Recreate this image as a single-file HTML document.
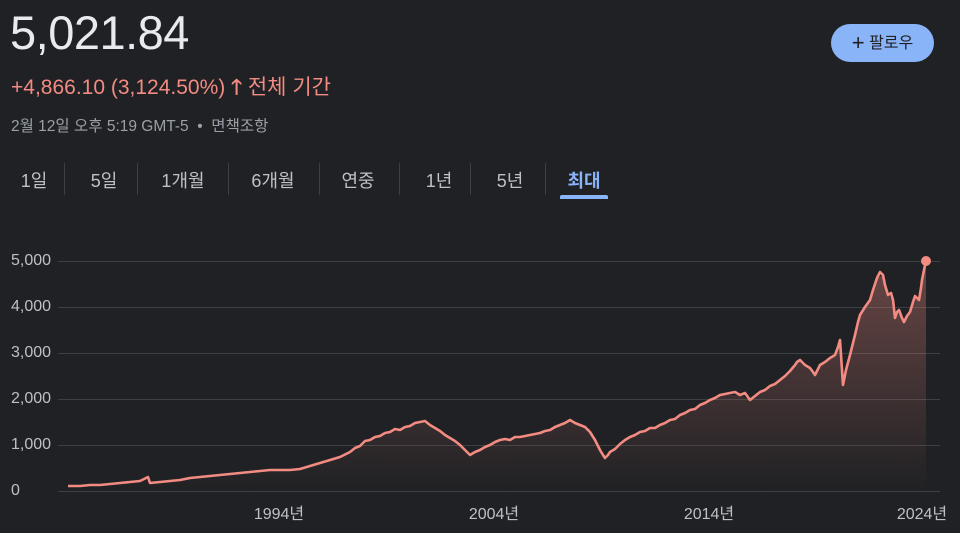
<!DOCTYPE html>
<html><head><meta charset="utf-8"><style>
body{margin:0;width:960px;height:533px;background:#202124;overflow:hidden;font-family:"Liberation Sans","Noto Sans CJK KR",sans-serif;position:relative}
.a{position:absolute;white-space:nowrap}
.tab{position:absolute;top:167px;font-size:18px;color:#bdc1c6;transform:translateX(-50%);white-space:nowrap}
.sep{position:absolute;top:163px;width:1px;height:32px;background:#3c4043}
.yl{position:absolute;left:11px;font-size:16px;color:#bdc1c6}
.xl{position:absolute;top:500px;font-size:16px;color:#bdc1c6;transform:translateX(-50%);white-space:nowrap}
</style></head><body>
<div class="a" style="left:10px;top:5px;font-size:47px;color:#e8eaed;letter-spacing:-0.5px">5,021.84</div>
<div class="a" style="left:11px;top:71px;font-size:21px;color:#f28b82">+4,866.10 (3,124.50%) <b style="font-weight:bold">🡑</b> 전체 기간</div>
<div class="a" style="left:11px;top:114px;font-size:15.5px;color:#9aa0a6">2월 12일 오후 5:19 GMT-5 &nbsp;•&nbsp; 면책조항</div>
<div class="a" style="left:831px;top:24px;width:103px;height:38px;border-radius:19px;background:#8ab4f8;color:#202124;font-size:16px;line-height:38px;text-align:center"><span style="font-size:22px;vertical-align:-2px">+</span> 팔로우</div>
<div class="tab" style="left:34px">1일</div>
<div class="tab" style="left:104px">5일</div>
<div class="tab" style="left:183px">1개월</div>
<div class="tab" style="left:273px">6개월</div>
<div class="tab" style="left:358px">연중</div>
<div class="tab" style="left:439px">1년</div>
<div class="tab" style="left:510px">5년</div>
<div class="tab" style="left:584px;color:#8ab4f8;font-weight:bold">최대</div>
<div class="sep" style="left:64px"></div><div class="sep" style="left:137px"></div><div class="sep" style="left:228px"></div><div class="sep" style="left:319px"></div><div class="sep" style="left:399px"></div><div class="sep" style="left:470px"></div><div class="sep" style="left:545px"></div>
<div class="a" style="left:560px;top:195px;width:48px;height:4px;border-radius:2px 2px 0 0;background:#8ab4f8"></div>
<div class="yl" style="top:252px">5,000</div>
<div class="yl" style="top:298px">4,000</div>
<div class="yl" style="top:344px">3,000</div>
<div class="yl" style="top:390px">2,000</div>
<div class="yl" style="top:436px">1,000</div>
<div class="yl" style="top:482px">0</div>
<div class="xl" style="left:279px">1994년</div>
<div class="xl" style="left:494px">2004년</div>
<div class="xl" style="left:709px">2014년</div>
<div class="xl" style="left:922px">2024년</div>
<svg class="a" style="left:0;top:0" width="960" height="533">
<defs><linearGradient id="g" x1="0" y1="0" x2="0" y2="1"><stop offset="0" stop-color="#f28b82" stop-opacity="0.35"/><stop offset="1" stop-color="#f28b82" stop-opacity="0"/></linearGradient></defs>
<g stroke="#3c4043" stroke-width="1"><line x1="58" y1="261.5" x2="940" y2="261.5"/><line x1="58" y1="307.5" x2="940" y2="307.5"/><line x1="58" y1="353.5" x2="940" y2="353.5"/><line x1="58" y1="399.5" x2="940" y2="399.5"/><line x1="58" y1="445.5" x2="940" y2="445.5"/><line x1="58" y1="491.5" x2="940" y2="491.5"/></g>
<polygon fill="url(#g)" points="68,486 100,485 140,481 148,478 150,483 180,480 210,476 240,473 270,470 300,469 320,463 340,457 360,446 380,436 400,430 420,422 430,425 445,435 460,445 470,455 480,450 500,440 520,437 540,433 560,425 570,420 585,427 595,440 600,450 605,458 610,452 625,440 640,432 660,425 680,415 700,405 720,395 740,395 750,400 760,392 780,380 795,365 800,360 810,368 815,375 820,365 835,355 840,340 843,385 846,370 855,335 860,315 870,300 877,278 883,275 888,295 893,300 895,318 899,310 904,322 910,312 915,296 919,300 922,280 926,261 926,491 68,491"/>
<polyline fill="none" stroke="#f28b82" stroke-width="2.6" stroke-linejoin="round" points="68,486 80,486 90,485 100,485 110,484 120,483 130,482 140,481 146,478 148,477 150,483 160,482 170,481 180,480 190,478 200,477 210,476 220,475 230,474 240,473 250,472 260,471 270,470 280,470 290,470 300,469 310,466 320,463 330,460 340,457 350,452 355,448 360,446 365,441 370,440 375,437 380,436 385,433 390,432 395,429 400,430 405,427 410,426 415,423 420,422 425,421 430,425 435,428 440,431 445,435 450,438 455,441 460,445 465,450 470,455 475,452 480,450 485,447 490,445 495,442 500,440 505,439 510,440 515,437 520,437 525,436 530,435 535,434 540,433 545,431 550,430 555,427 560,425 565,423 570,420 575,423 580,425 585,427 590,432 595,440 598,446 600,450 603,455 605,458 608,455 610,452 615,449 620,444 625,440 630,437 635,435 640,432 645,431 650,428 655,428 660,425 665,423 670,420 675,419 680,415 685,413 690,410 695,409 700,405 705,403 710,400 715,398 720,395 725,394 730,393 735,392 740,395 745,393 750,400 755,396 760,392 765,390 770,386 775,384 780,380 785,376 790,371 795,365 797,362 800,360 805,365 810,368 813,372 815,375 818,369 820,365 825,362 830,358 835,355 838,347 840,340 842,370 843,385 846,370 850,355 855,335 858,322 860,315 865,307 870,300 873,290 877,278 880,272 883,275 885,285 888,295 891,293 893,300 895,318 897,312 899,310 902,318 904,322 907,316 910,312 913,302 915,296 917,298 919,300 921,288 922,280 924,270 926,261"/>
<circle cx="926" cy="261" r="5" fill="#f28b82"/>
</svg>
</body></html>
